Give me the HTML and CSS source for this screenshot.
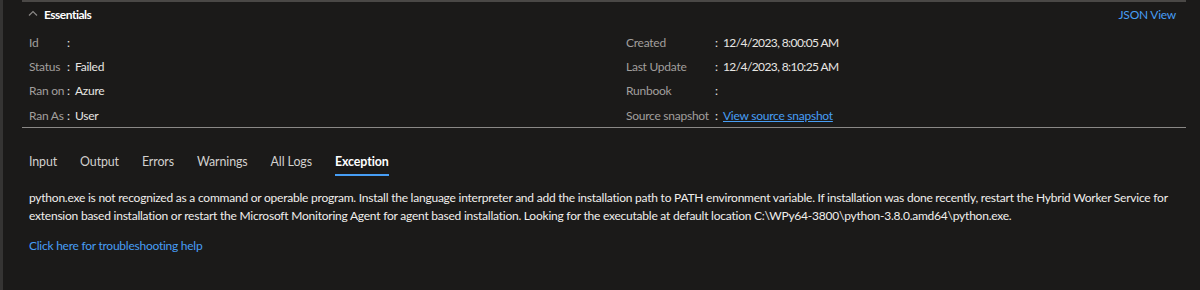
FILE: index.html
```html
<!DOCTYPE html>
<html lang="en">
<head>
    <meta charset="UTF-8">
    <title>Job - Exception</title>
    <link rel="stylesheet" href="styles.css">
</head>
<body>
    <div class="page">
        <!-- Essentials -->
        <section class="essentials">
            <div class="ess-head">
                <button class="toggle">
                    <svg width="10" height="6" viewBox="0 0 10 6"><path d="M1 5.5 L5 1.5 L9 5.5" fill="none" stroke="#8a8886" stroke-width="1.2"/></svg>
                    <span>Essentials</span>
                </button>
                <a class="link" href="#">JSON View</a>
            </div>
            <div class="props">
                <div class="col">
                    <div class="prop"><span class="key short">Id</span><span class="sep">:</span><span class="val"></span></div>
                    <div class="prop"><span class="key short">Status</span><span class="sep">:</span><span class="val">Failed</span></div>
                    <div class="prop"><span class="key short">Ran on</span><span class="sep">:</span><span class="val">Azure</span></div>
                    <div class="prop"><span class="key short">Ran As</span><span class="sep">:</span><span class="val">User</span></div>
                </div>
                <div class="col">
                    <div class="prop"><span class="key long">Created</span><span class="sep">:</span><span class="val num">12/4/2023, 8:00:05 AM</span></div>
                    <div class="prop"><span class="key long">Last Update</span><span class="sep">:</span><span class="val num">12/4/2023, 8:10:25 AM</span></div>
                    <div class="prop"><span class="key long">Runbook</span><span class="sep">:</span><span class="val"></span></div>
                    <div class="prop"><span class="key long">Source snapshot</span><span class="sep">:</span><a class="link under" href="#">View source snapshot</a></div>
                </div>
            </div>
        </section>

        <!-- Abas -->
        <nav class="tabs">
            <span class="tab">Input</span>
            <span class="tab">Output</span>
            <span class="tab">Errors</span>
            <span class="tab">Warnings</span>
            <span class="tab">All Logs</span>
            <span class="tab active">Exception</span>
        </nav>

        <div class="exception">
            <p>python.exe is not recognized as a command or operable program. Install the language interpreter and add the installation path to PATH environment variable. If installation was done recently, restart the Hybrid Worker Service for extension based installation or restart the Microsoft Monitoring Agent for agent based installation. Looking for the executable at default location C:\WPy64-3800\python-3.8.0.amd64\python.exe.</p>
            <a class="link" href="#">Click here for troubleshooting help</a>
        </div>
    </div>
</body>
</html>
```

FILE: styles.css
```css
body {
    margin: 0;
    background-color: #1b1a19;
    font-family: Lato, "Open Sans", sans-serif;
    font-size: 12px;
    letter-spacing: -0.25px;
    color: #e8e6e3;
    height: 290px;
    overflow: hidden;
}

.page {
    border-left: 3px solid #353433;
    height: 100%;
    padding: 0 14px 0 19px;
}

.link {
    color: #479ef5;
    text-decoration: none;
}

.link.under {
    text-decoration: underline;
}

/* Essentials */
.essentials {
    border-top: 2px solid #4a4846;
    border-bottom: 1px solid #8a8886;
}

.ess-head {
    display: flex;
    justify-content: space-between;
    align-items: center;
    height: 24px;
    padding: 0 10px 0 6px;
}

.toggle {
    display: flex;
    align-items: center;
    gap: 6px;
    background: none;
    border: none;
    padding: 0;
    color: #ffffff;
    font: inherit;
    font-weight: 700;
    letter-spacing: -0.5px;
}

.toggle svg {
    margin-bottom: 2px;
}

.props {
    display: grid;
    grid-template-columns: 597px 1fr;
    padding: 4px 0 0 7px;
}

.prop {
    display: flex;
    height: 24.3px;
    align-items: center;
    white-space: nowrap;
}

.key {
    color: #a19f9d;
}

.key.short {
    width: 38px;
}

.key.long {
    width: 89px;
}

.sep {
    width: 8px;
    color: #e8e6e3;
}

.val.num {
    letter-spacing: -0.6px;
}

/* Tabs */
.tabs {
    display: flex;
    gap: 23px;
    padding: 26px 0 0 7px;
    font-size: 12.4px;
    letter-spacing: -0.1px;
}

.tab {
    color: #d2d0ce;
    padding-bottom: 5px;
    border-bottom: 2px solid transparent;
}

.tab.active {
    color: #ffffff;
    font-weight: 700;
    border-bottom-color: #479ef5;
}

.exception {
    padding: 8px 0 0 7px;
}

.exception p {
    margin: 5px 0 13px;
    line-height: 18px;
    letter-spacing: -0.23px;
    color: #f0eeec;
}
```
